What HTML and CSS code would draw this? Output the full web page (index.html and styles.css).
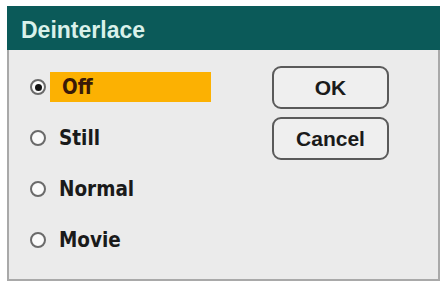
FILE: index.html
```html
<!DOCTYPE html>
<html>
<head>
<meta charset="utf-8">
<link rel="stylesheet" href="styles.css">
</head>
<body>
<div class="dialog">
  <div class="titlebar">Deinterlace</div>
  <div class="content">
    <div class="options">
      <div class="option">
        <span class="radio checked"></span>
        <span class="label selected">Off</span>
      </div>
      <div class="option">
        <span class="radio"></span>
        <span class="label">Still</span>
      </div>
      <div class="option">
        <span class="radio"></span>
        <span class="label">Normal</span>
      </div>
      <div class="option">
        <span class="radio"></span>
        <span class="label">Movie</span>
      </div>
    </div>
    <div class="buttons">
      <div class="btn">OK</div>
      <div class="btn">Cancel</div>
    </div>
  </div>
</div>
</body>
</html>
```

FILE: styles.css
```css
html, body {
  margin: 0;
  padding: 0;
  background: #ffffff;
}
body {
  width: 443px;
  height: 284px;
  overflow: hidden;
  font-family: "DejaVu Sans", "Liberation Sans", sans-serif;
}
.dialog {
  margin: 6px 0 0 7px;
  width: 433px;
  height: 275px;
  display: flex;
  flex-direction: column;
  background: #ebebeb;
}
.titlebar {
  height: 44px;
  background: #0b5a59;
  color: #d9f1ea;
  font-family: "Liberation Sans", sans-serif;
  font-size: 23px;
  font-weight: bold;
  line-height: 48px;
  padding-left: 14px;
  box-sizing: border-box;
}
.content {
  flex: 1;
  display: flex;
  border: 2px solid #a9a9a9;
  border-top: none;
  padding: 22px 0 0 21px;
}
.options {
  display: flex;
  flex-direction: column;
  gap: 21px;
}
.option {
  display: flex;
  align-items: center;
  height: 30px;
}
.radio {
  width: 12px;
  height: 12px;
  border: 2px solid #6a6a6a;
  border-radius: 50%;
  background: #fafafa;
  box-sizing: content-box;
  position: relative;
  margin-right: 4px;
  flex: none;
}
.radio.checked::after {
  content: "";
  position: absolute;
  left: 2.5px;
  top: 2.5px;
  width: 7px;
  height: 7px;
  border-radius: 50%;
  background: #111;
}
.label {
  box-sizing: border-box;
  height: 30px;
  line-height: 31px;
  padding-left: 9px;
  width: 161px;
  flex: none;
  font-family: "DejaVu Sans Condensed", "DejaVu Sans", sans-serif;
  font-stretch: condensed;
  font-size: 20.5px;
  font-weight: bold;
  color: #1a1a1a;
}
.label.selected {
  padding-left: 12px;
  background: #fcb102;
  color: #3a1a08;
}
.buttons {
  margin-left: 61px;
  margin-top: -6px;
  display: flex;
  flex-direction: column;
  gap: 8px;
}
.btn {
  width: 117px;
  height: 43px;
  box-sizing: border-box;
  border: 2px solid #5a5a5a;
  border-radius: 9px;
  background: #efefef;
  text-align: center;
  line-height: 40px;
  font-family: "Liberation Sans", sans-serif;
  font-size: 21px;
  font-weight: bold;
  color: #1a1a1a;
}
```
